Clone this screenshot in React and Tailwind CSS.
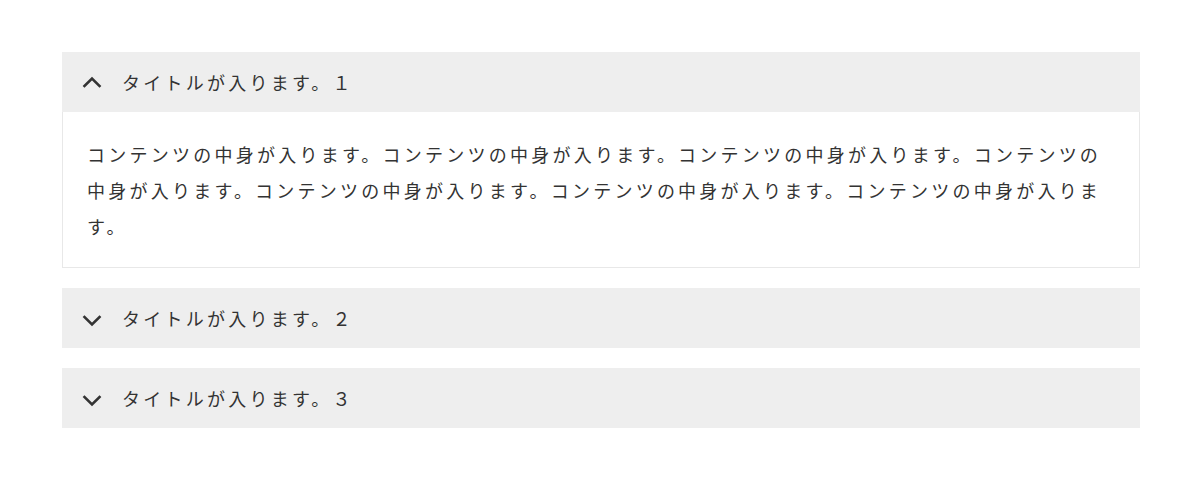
import React, { useState } from 'react';

const items = [
  { id: 1, title: 'タイトルが入ります。１' },
  { id: 2, title: 'タイトルが入ります。２' },
  { id: 3, title: 'タイトルが入ります。３' },
];

const body =
  'コンテンツの中身が入ります。コンテンツの中身が入ります。コンテンツの中身が入ります。コンテンツの中身が入ります。コンテンツの中身が入ります。コンテンツの中身が入ります。コンテンツの中身が入ります。';

// chevron drawn by hand, points up when open
const Chevron = ({ open }) => (
  <svg width="20" height="12" viewBox="0 0 20 12" className={open ? 'shrink-0' : 'shrink-0 rotate-180 translate-y-[3px]'}>
    <polyline points="2.5,10 10,2.5 17.5,10" fill="none" stroke="#333" strokeWidth="2.6" strokeLinecap="square" />
  </svg>
);

const App = () => {
  const [open, setOpen] = useState(1);

  return (
    <div className="min-h-[495px] bg-white pt-[52px] pl-[62px] pr-[60px] text-[#333] font-['Hiragino_Sans','Noto_Sans_CJK_JP',sans-serif]">
      <div className="flex flex-col gap-5">
        {items.map((item) => (
          <div key={item.id}>
            <button
              onClick={() => setOpen(open === item.id ? null : item.id)}
              className="flex h-[60px] w-full items-center gap-5 bg-[#eeeeee] pl-5 text-left text-[18px] tracking-[0.18em]"
            >
              <Chevron open={open === item.id} />
              <span>{item.title}</span>
            </button>
            {open === item.id && (
              <div className="border border-t-0 border-[#e8e8e8] px-6 pt-6 pb-[23px] text-[18px] leading-[36px] tracking-[0.18em]">
                {body}
              </div>
            )}
          </div>
        ))}
      </div>
    </div>
  );
};

export default App;
